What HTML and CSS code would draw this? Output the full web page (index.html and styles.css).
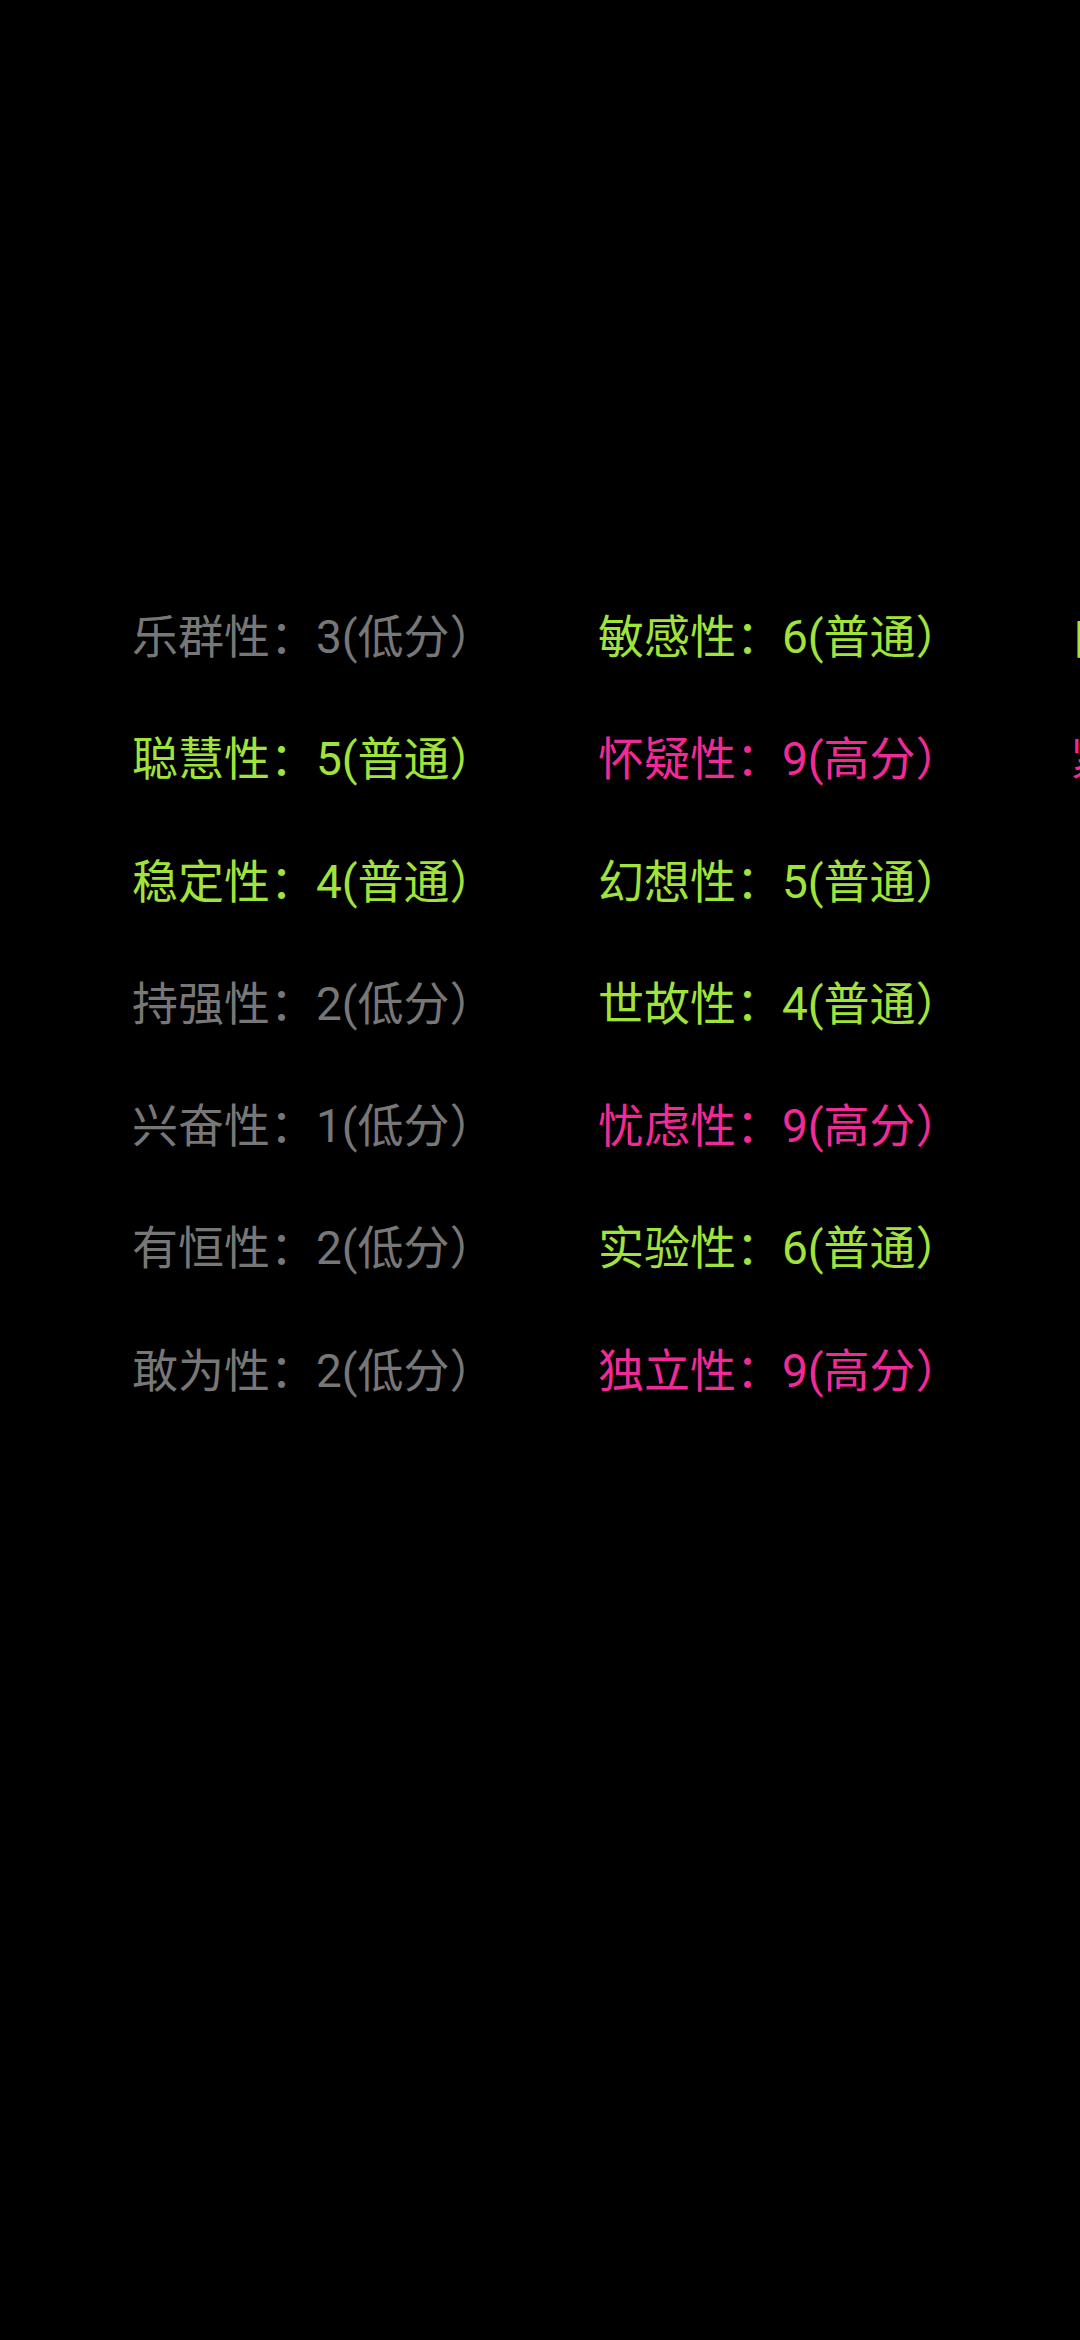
FILE: index.html
```html
<!DOCTYPE html>
<html lang="zh-CN">
<head>
<meta charset="utf-8">
<title>16PF</title>
<link rel="stylesheet" href="styles.css">
</head>
<body>
<div class="screen">
  <div class="factors">
    <div class="col col-1">
      <div class="item low">乐群性：3(低分）</div>
      <div class="item mid">聪慧性：5(普通）</div>
      <div class="item mid">稳定性：4(普通）</div>
      <div class="item low">持强性：2(低分）</div>
      <div class="item low">兴奋性：1(低分）</div>
      <div class="item low">有恒性：2(低分）</div>
      <div class="item low">敢为性：2(低分）</div>
    </div>
    <div class="col col-2">
      <div class="item mid">敏感性：6(普通）</div>
      <div class="item high">怀疑性：9(高分）</div>
      <div class="item mid">幻想性：5(普通）</div>
      <div class="item mid">世故性：4(普通）</div>
      <div class="item high">忧虑性：9(高分）</div>
      <div class="item mid">实验性：6(普通）</div>
      <div class="item high">独立性：9(高分）</div>
    </div>
    <div class="col col-3">
      <div class="item mid">自律性：6(普通）</div>
      <div class="item high">紧张性：8(高分）</div>
    </div>
  </div>
</div>
</body>
</html>
```
FILE: styles.css
```css
html, body {
  margin: 0;
  padding: 0;
  background: #000;
}
body {
  width: 1080px;
  height: 2340px;
  overflow: hidden;
  font-family: Roboto, "Noto Sans CJK SC", sans-serif;
}
.screen {
  padding-top: 576px;
  padding-left: 132px;
}
.factors {
  display: grid;
  grid-template-columns: 466px 472px max-content;
  white-space: nowrap;
}
.col {
  display: flex;
  flex-direction: column;
}
.item {
  font-size: 46px;
  line-height: 122.25px;
  height: 122.25px;
}
.low { color: #777777; }
.mid { color: #a0e43a; }
.high { color: #f22a98; }
```
